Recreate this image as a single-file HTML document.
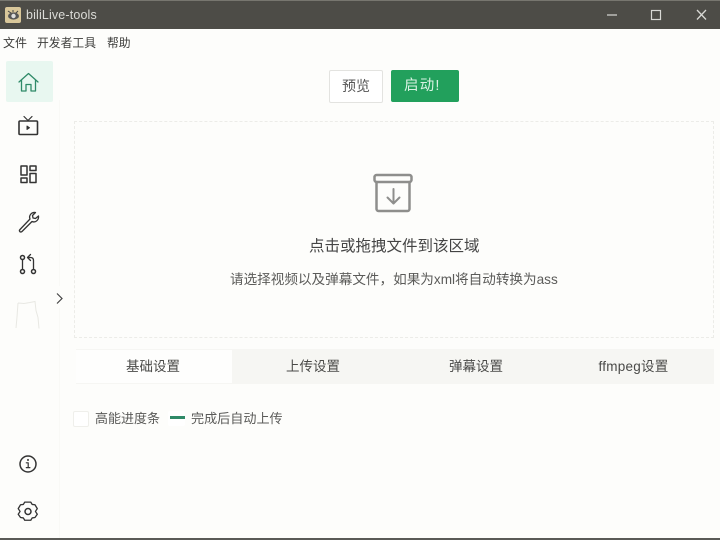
<!DOCTYPE html>
<html><head><meta charset="utf-8">
<style>
html,body{margin:0;padding:0;width:720px;height:540px;overflow:hidden;background:#fdfdfb;font-family:"Liberation Sans","Noto Sans CJK SC",sans-serif;color:#4a4a48}
#w{position:absolute;left:0;top:0;width:720px;height:540px;filter:blur(.35px)}
.a{position:absolute;white-space:nowrap}
svg{position:absolute;overflow:visible}
</style></head><body><div id="w">
<div class="a" style="left:0;top:0;width:720px;height:29px;background:#4d4c47"></div>
<div class="a" style="left:0;top:0;width:720px;height:1px;background:#77766f"></div>
<div class="a" style="left:5px;top:7px;width:16px;height:16px;background:#d9c79a;border-radius:2px"></div>
<svg style="left:5px;top:7px" width="16" height="16"><ellipse cx="8.500" cy="9" rx="5.500" ry="3.600" fill="#555"/><circle cx="8.500" cy="9" r="2.200" fill="#ddd"/><path d="M3 4l3 2M8 3v2M13 4l-2 2" stroke="#444" stroke-width="1"/></svg>
<div class="a" style="left:26px;top:7px;font-size:12.500px;line-height:17px;color:#dcdcd8;letter-spacing:.15px">biliLive-tools</div>
<svg style="left:606px;top:10px" width="100" height="12" fill="none" stroke="#d8d8d4" stroke-width="1.200"><path d="M1 5h10"/><rect x="45.500" y="0.500" width="9" height="9"/><path d="M91 0l9 9.500M100 0l-9 9.500" stroke-width="1.300"/></svg>
<div class="a" style="left:3px;top:36px;font-size:12px;line-height:15px;color:#3d3d3b">文件</div>
<div class="a" style="left:37px;top:36px;font-size:11.800px;line-height:15px;color:#3d3d3b">开发者工具</div>
<div class="a" style="left:107px;top:36px;font-size:11.800px;line-height:15px;color:#3d3d3b">帮助</div>

<div class="a" style="left:6px;top:61px;width:47px;height:41px;background:#e8f7f0;border-radius:2px"></div>
<div class="a" style="left:59px;top:100px;width:1px;height:440px;background:#f9f9f6"></div>
<svg style="left:0;top:0" width="60" height="540" fill="none" stroke="#333" stroke-width="1.500" stroke-linejoin="round" stroke-linecap="round">
<path d="M19 82l9.500-8.500 9.500 8.500M21.500 80v11h4.500v-6.500h5v6.500h4.500v-11" stroke="#2f8a68" stroke-width="1.300"/>
<rect x="19" y="121" width="18.500" height="13.500" rx="1" stroke-width="1.600"/><path d="M24 116.500l4 4 4-4" stroke-width="1.200"/><path d="M27 126v3.500l2.500-1.750z" fill="#333" stroke-width="1"/>
<rect x="21" y="166" width="6" height="9"/><rect x="30" y="166" width="6" height="4.500"/><rect x="21" y="178" width="6" height="4.500"/><rect x="30" y="173.500" width="6" height="9"/>
<path d="M20 229.500l10-10.500c-1.500-3.500 1.500-7 5.500-6.500l-3 3 .5 2.500 2.500.5 3-2.500c.5 4-3 7-6.500 5.500l-10 10c-1.500 1.500-3.500-.5-2-2z" stroke-width="1.300"/>
<circle cx="22.500" cy="257.500" r="2"/><circle cx="22.500" cy="271.500" r="2"/><circle cx="33.500" cy="271.500" r="2"/><path d="M22.500 259.500v10M33.500 269.500v-9c0-2-1-3-3-3h-2M30.500 254.500l-3 3 3 3" stroke-width="1.300"/>
<circle cx="28" cy="464" r="8"/><path d="M26.300 462.800h1.900v4.700M26.300 467.600h3.600" stroke-width="1.200"/><path d="M28 459.800v.3" stroke-width="1.800"/>
<path d="M24.500 504.500h6.500l1.500 2.500 3 .3 2.500 4.200-2 3 2 3-2.500 3.500-3 .5-1.500 2.500h-6.500l-1.500-2.500-3-.5-2.500-3.500 2-3-2-3 2.500-4.200 3-.3z" transform="translate(0 -1) translate(27.800 511.500) scale(.93) translate(-27.800 -513.500)" stroke-width="1.400"/><circle cx="28" cy="511.500" r="3"/>
</svg>
<svg style="left:0;top:0" width="60" height="340" fill="none" stroke="#e8e8e3" stroke-width="1"><path d="M18 303l-1 14-1 11M18 303l6 .5 6-1 5-1 1 9 2 7 1 11"/></svg>
<div class="a" style="left:49px;top:286px;width:22px;height:22px;border-radius:50%;background:#fdfdfb"></div>
<svg style="left:56px;top:293px" width="8" height="11" fill="none" stroke="#444" stroke-width="1.200"><path d="M1 .500l5 5-5 5"/></svg>

<div class="a" style="left:329px;top:70px;width:52px;height:31px;background:#fff;border:1px solid #e3e3e0;border-radius:2px;text-align:center;font-size:14px;line-height:30px;color:#555">预览</div>
<div class="a" style="left:391px;top:70px;width:68px;height:32px;background:#22a05c;border-radius:2px;font-size:14.500px;letter-spacing:1.200px;line-height:32px;color:#d9f2e3"><span style="position:absolute;left:13px;top:0">启动!</span></div>

<div class="a" style="left:74px;top:121px;width:638px;height:215px;border:1px dashed #ecece8;box-sizing:content-box"></div>
<svg style="left:370px;top:170px" width="46" height="46" fill="none" stroke="#8e8e8c" stroke-width="2.500" stroke-linejoin="round" stroke-linecap="round"><rect x="4.500" y="5" width="37" height="7" rx="2"/><path d="M6.500 12v27a2 2 0 0 0 2 2h29a2 2 0 0 0 2-2v-27"/><path d="M23.500 19v14M17.500 27.500l6 6 6-6" stroke-width="2"/></svg>
<div class="a" style="left:309px;top:237px;font-size:15.500px;line-height:20px;color:#444">点击或拖拽文件到该区域</div>
<div class="a" style="left:230px;top:271px;font-size:13.600px;line-height:17px;color:#5b5b59">请选择视频以及弹幕文件，如果为xml将自动转换为ass</div>

<div class="a" style="left:76px;top:349px;width:638px;height:35px;background:#f6f6f3"></div>
<div class="a" style="left:76px;top:350px;width:156px;height:33px;background:#fefefd"></div>
<div class="a" style="left:76px;top:358px;width:154px;text-align:center;font-size:13.500px;line-height:18px;color:#4a4a48">基础设置</div>
<div class="a" style="left:236px;top:358px;width:154px;text-align:center;font-size:13.500px;line-height:18px;color:#4a4a48">上传设置</div>
<div class="a" style="left:398px;top:358px;width:156px;text-align:center;font-size:13.500px;line-height:18px;color:#4a4a48">弹幕设置</div>
<div class="a" style="left:556px;top:358px;width:155px;text-align:center;font-size:13.500px;letter-spacing:.25px;line-height:18px;color:#4a4a48">ffmpeg设置</div>

<div class="a" style="left:73px;top:411px;width:14px;height:14px;background:#fff;border:1px solid #efefeb;border-radius:2px"></div>
<div class="a" style="left:95px;top:410px;font-size:13px;line-height:18px;color:#5a5a58">高能进度条</div>
<div class="a" style="left:168px;top:411px;width:17px;height:15px;background:#fff;border-radius:2px"></div>
<div class="a" style="left:170px;top:416px;width:15px;height:3px;background:#2f8a68"></div>
<div class="a" style="left:191px;top:410px;font-size:13.100px;line-height:18px;color:#5a5a58">完成后自动上传</div>
<div class="a" style="left:0;top:538px;width:720px;height:2px;background:#5a5a56"></div>
</div></body></html>
